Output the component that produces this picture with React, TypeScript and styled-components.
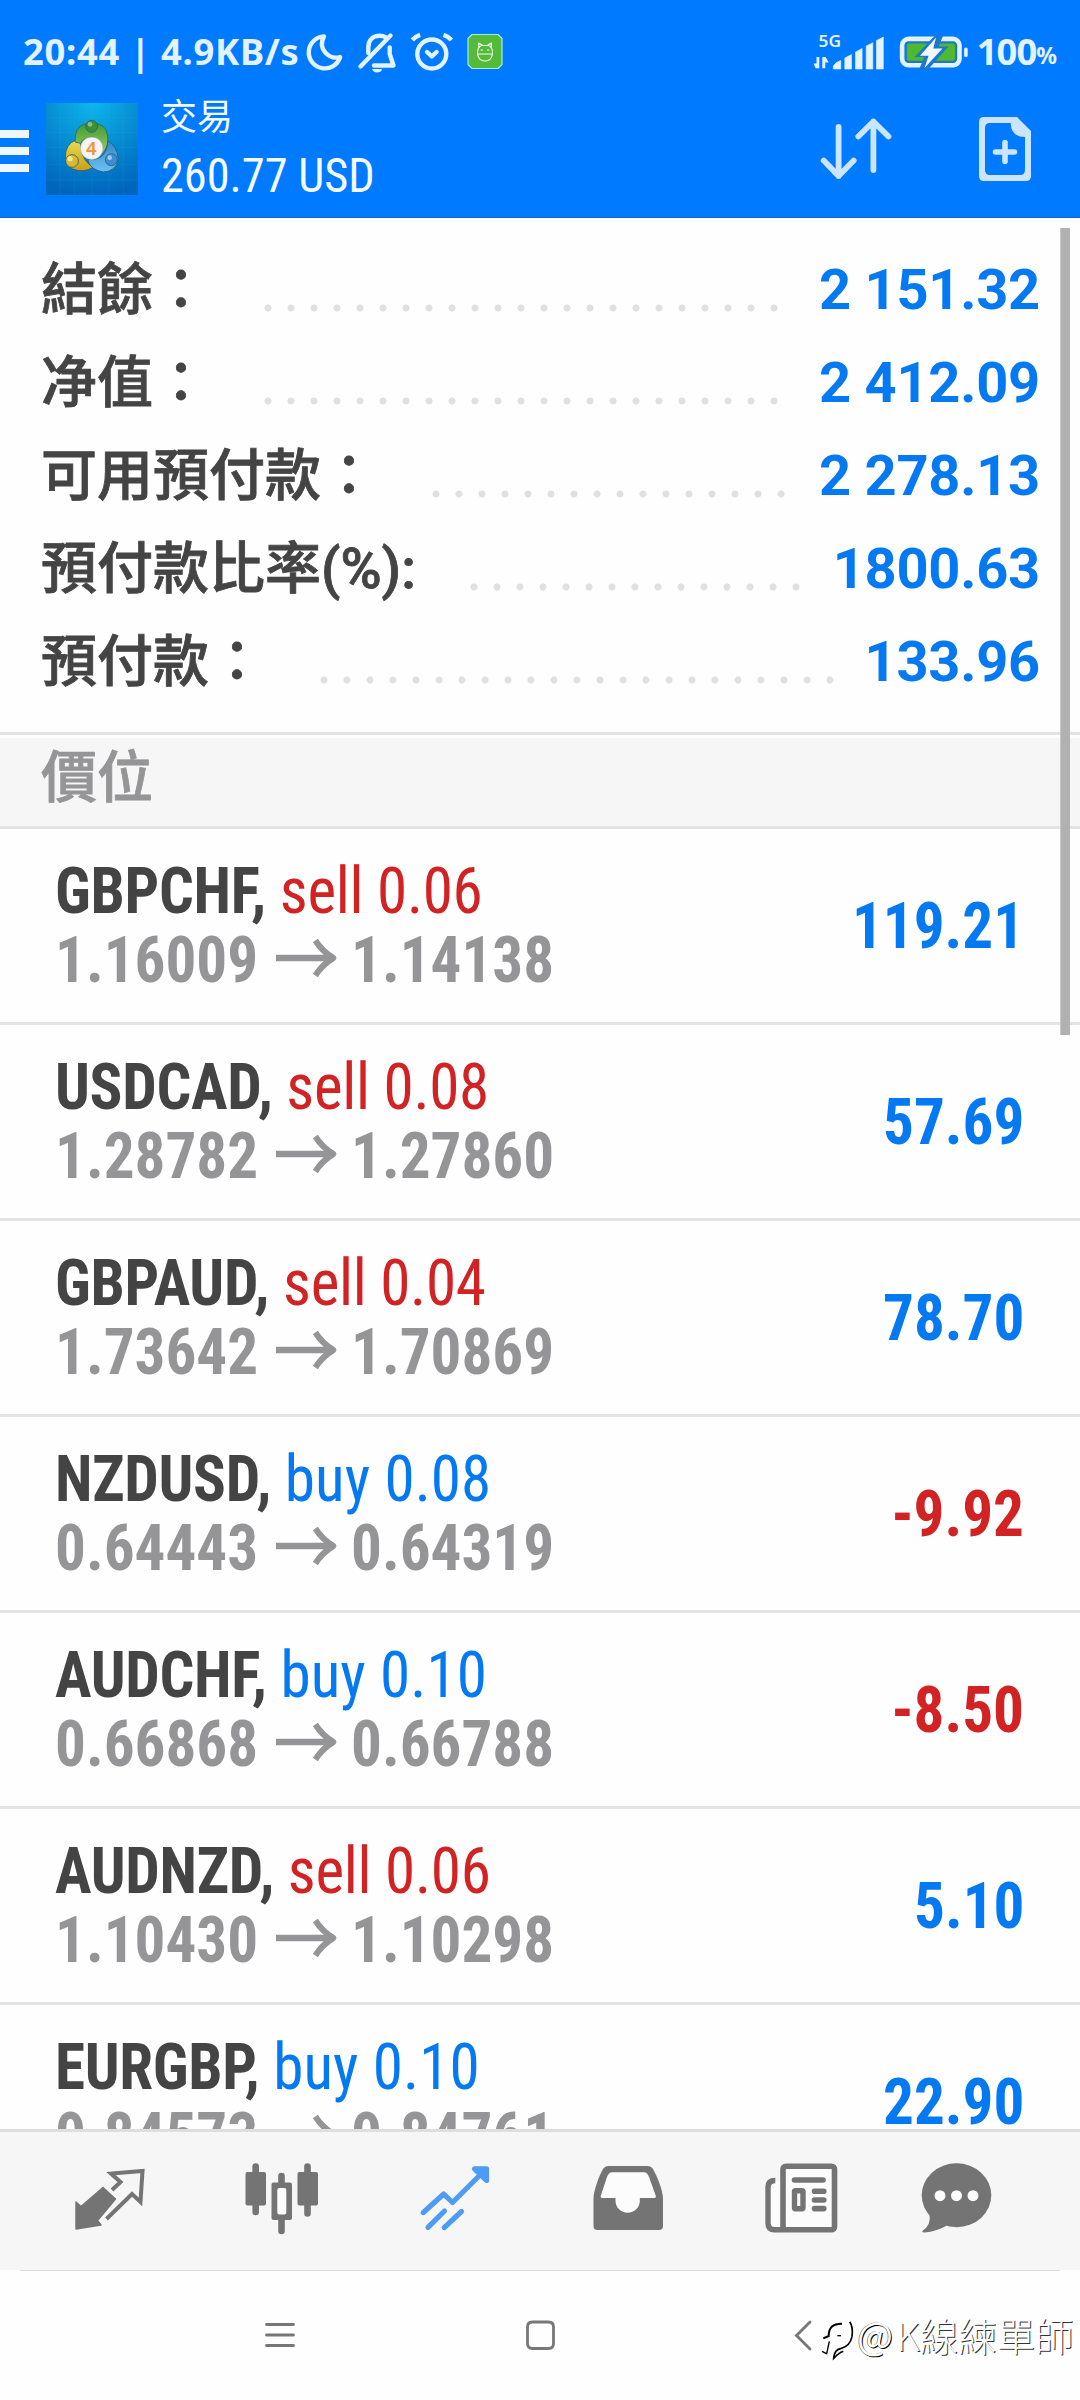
import React from 'react';
import styled, { createGlobalStyle } from 'styled-components';

const BLUE = '#007aff';
const VALUE_BLUE = '#0579f2';
const RED = '#d12323';
const ICE = '#e2f2ff';
const GREY = '#747474';
const LINE = '#e3e3e3';

const GlobalStyle = createGlobalStyle`
  * { box-sizing: border-box; }
  body {
    margin: 0;
    background: #fefefe;
    font-family: Roboto, "Noto Sans CJK TC", sans-serif;
  }
  svg { display: block; flex: none; }
`;

const Screen = styled.div`
  width: 1080px;
  height: 2400px;
  display: flex;
  flex-direction: column;
  overflow: hidden;
  background: #fefefe;
`;

/* ---------- header ---------- */

const Header = styled.header`
  flex: none;
  height: 218px;
  background: ${BLUE};
  border-bottom: 1px solid #1565c0;
`;

const StatusBar = styled.div`
  height: 102px;
  padding: 0 23px 0 23px;
  display: flex;
  align-items: center;
  justify-content: space-between;
  color: ${ICE};
`;

const StatusGroup = styled.div`
  display: flex;
  align-items: center;
`;

const StatusText = styled.span<{ $spacing?: number }>`
  font: 700 36.4px/54px "Noto Sans", sans-serif;
  letter-spacing: ${(p) => p.$spacing ?? 0}px;
  white-space: pre;
`;

const Percent = styled.span`
  font: 700 23px/54px "Noto Sans", sans-serif;
  padding-top: 8px;
`;

const AppBar = styled.div`
  height: 115px;
  padding-right: 47px;
  display: flex;
  align-items: flex-start;
`;

const Burger = styled.div`
  width: 29px;
  height: 42px;
  margin: 28px 17px 0 0;
  display: flex;
  flex-direction: column;
  justify-content: space-between;
`;

const BurgerBar = styled.i`
  height: 8px;
  background: #eef7ff;
`;

const LogoBox = styled.div`
  margin: 1px 23px 0 0;
`;

const Titles = styled.div`
  flex: 1;
  color: #f4faff;
`;

const PageTitle = styled.div`
  font-size: 36px;
  line-height: 32px;
  white-space: nowrap;
`;

const Equity = styled.div`
  font-size: 49px;
  font-stretch: 75%;
  line-height: 84px;
  white-space: nowrap;
  transform: scaleX(0.945);
  transform-origin: left;
`;

const HeaderActions = styled.div`
  display: flex;
  gap: 84px;
`;

/* ---------- content ---------- */

const Content = styled.main`
  position: relative;
  flex: none;
  height: 1911px;
  overflow: hidden;
`;

const Scrollbar = styled.div`
  position: absolute;
  top: 10px;
  right: 10px;
  width: 10px;
  height: 807px;
  background: #b1b1b1;
  border-left: 1px solid #c8c8c8;
`;

const Account = styled.section`
  padding: 26px 40px 23px 41px;
  border-bottom: 3px solid ${LINE};
`;

const AccountRow = styled.div`
  height: 93px;
  display: flex;
  align-items: center;
  line-height: 93px;
  font-size: 56px;
  white-space: nowrap;
`;

const AccountLabel = styled.span`
  font-weight: 500;
  color: #444;
  -webkit-text-stroke: 0.8px #444;
`;

const Dots = styled.i<{ $count: number }>`
  width: ${(p) => p.$count * 23}px;
  height: 8px;
  margin: 34px auto 0 54.5px;
  background: radial-gradient(circle at 4px 4px, #e0e0e0 3.1px, transparent 3.9px) 0 0 / 23px 8px repeat-x;
`;

const AccountValue = styled.span`
  font-weight: 700;
  letter-spacing: -0.25px;
  color: ${VALUE_BLUE};
`;

const SectionTitle = styled.h2`
  margin: 3px 0 0;
  height: 91px;
  padding-left: 41px;
  background: #f6f6f6;
  border-bottom: 3px solid ${LINE};
  font-size: 56px;
  line-height: 80px;
  font-weight: 500;
  color: #959597;
  -webkit-text-stroke: 0.8px #959597;
`;

const Position = styled.article`
  height: 196px;
  padding: 28px 56px 0 55px;
  display: flex;
  justify-content: space-between;
  border-bottom: 3px solid ${LINE};
  font-size: 65px;
  font-stretch: 75%;
  font-weight: 700;
  white-space: nowrap;
`;

const PositionLine = styled.div`
  display: flex;
  align-items: center;
  height: 69px;
  line-height: 69px;
  transform: scaleX(0.94);
  transform-origin: left;
`;

const Symbol = styled.span`
  color: #444;
  letter-spacing: -0.3px;
  white-space: pre;
`;

const Side = styled.span<{ $color: string; $spacing: number }>`
  font-weight: 400;
  letter-spacing: ${(p) => p.$spacing}px;
  color: ${(p) => p.$color};
`;

const Price = styled.span`
  color: #959597;
`;

const Profit = styled.div<{ $color: string }>`
  height: 138px;
  line-height: 138px;
  color: ${(p) => p.$color};
  transform: scaleX(0.94);
  transform-origin: right;
`;

const ArrowIcon = styled.svg`
  margin: 0 14px 5px 19px;
`;

/* ---------- bottom ---------- */

const TabBar = styled.nav`
  flex: none;
  height: 141px;
  padding-left: 23px;
  display: flex;
  align-items: center;
  background: #f6f6f6;
  border-top: 3px solid #dedede;
`;

const Tab = styled.div<{ $width: number }>`
  width: ${(p) => p.$width}px;
  display: flex;
  justify-content: center;
`;

const NavBar = styled.footer`
  position: relative;
  flex: 1;
  padding-left: 150px;
  display: flex;
  align-items: center;
  background: #fefefe;

  &::before {
    content: '';
    position: absolute;
    top: 0;
    left: 20px;
    right: 20px;
    height: 1px;
    background: #dcdcdc;
  }
`;

const NavKey = styled.div`
  width: 260px;
  display: flex;
  justify-content: center;
`;

const Watermark = styled.div`
  position: absolute;
  left: 820px;
  top: 35px;
  display: flex;
  align-items: center;
  height: 58px;
  color: #fff;
  white-space: nowrap;
`;

const WatermarkAt = styled.span`
  margin: 0 3px 0 1px;
  font: 400 38px/58px "Noto Sans CJK TC", sans-serif;
  text-shadow: 1px 1px 0 #000, -0.5px -0.5px 0 #444;
`;

const WatermarkName = styled.span`
  font: 300 38.4px/58px "Noto Sans CJK TC", sans-serif;
  text-shadow: 1px 1px 0 #333;
`;

/* ---------- icons ---------- */

const StatusIcons = () => (
  <svg width="204" height="54" viewBox="300.5 24 204 54" fill="none" stroke={ICE} strokeWidth="4.4" strokeLinecap="round" strokeLinejoin="round">
    <path d="M324.5 36.4A16 16 0 1 0 340.6 57C330 60.5 317.5 49 324.5 36.4Z" />
    <path d="M391 35.5L361 66.5" />
    <path d="M368.8 53V47.5C368.8 39.5 374 35.7 380 35.7C382.5 35.7 384.5 36.2 386 37.2" />
    <path d="M390.2 47.5V54L394 65.5H374.5" />
    <path d="M372.5 69H382.8Q381.5 72.6 377.6 72.6Q374 72.6 372.5 69Z" fill={ICE} stroke="none" />
    <circle cx="432.3" cy="54" r="14.5" />
    <path d="M427.5 52L432.3 56.4L437.1 52" />
    <path d="M412.8 40Q416 36.3 420.6 34.8M444 34.8Q448.8 36.3 452 40" strokeLinecap="butt" />
    <path d="M472.5 34.5H498.5L502.5 38.5V64.5L498.5 68.5H472.5L468.5 64.5V38.5Z" fill="#54ba3a" stroke="#a5ecdf" strokeWidth="1.2" />
    <g stroke="#f0fff0" strokeWidth="1.2">
      <path d="M478 53.5Q478 46.500 482 45.500H489Q493 46.500 493 53.500Q492 61 485.500 61Q479 61 478 53.500Z" />
      <path d="M478 54H493M479.500 47.500L479 43L482.500 45M491.500 47.500L492 43L488.500 45M481.500 50H483M488 50H489.500" />
    </g>
  </svg>
);

const SignalIcons = () => (
  <svg width="166" height="54" viewBox="810.5 24 166 54" fill={ICE}>
    <text x="818" y="46.700" fontFamily="Noto Sans, sans-serif" fontWeight="600" fontSize="15.500" textLength="22.500" lengthAdjust="spacingAndGlyphs">5G</text>
    <path d="M818.800 57V68.200H815.200L813 63.500H816V57Z M821.800 68.200V57H825L828.300 62.500H824.800V68.200Z" />
    <path d="M832.800 69V66Q835 62 840.300 60.500V69Z M844.300 69V58L851 54.500V69Z M855 69V52L861.600 48.500V69Z M865.700 69V46L872.300 42.700V69Z M876 69V40.500L882.800 37V69Z" stroke={ICE} strokeWidth="0.6" strokeLinejoin="round" />
    <rect x="901.600" y="38.900" width="57.400" height="26.400" rx="6.500" fill="#1e78c8" stroke={ICE} strokeWidth="4.600" />
    <rect x="906.500" y="43.500" width="48" height="17.200" rx="2.500" fill="#4fb92f" />
    <rect x="963.600" y="47.500" width="3.600" height="9.400" rx="1.500" />
    <path d="M935 35L914 57H924L918.500 69.500H927.500L948 46.500H938L943 35Z" fill="#1a78d0" />
    <path d="M935.500 37.500L919.500 55.800H928L924 68L942 48.600H932.800Z" fill="#f1f9ff" />
  </svg>
);

const Logo = () => (
  <svg width="92" height="92" viewBox="18 21 276 276">
    <defs>
      <radialGradient id="sky" cx="0.5" cy="0" r="1">
        <stop offset="0" stopColor="#0db6ea" />
        <stop offset="0.55" stopColor="#0688cf" />
        <stop offset="1" stopColor="#0065bd" />
      </radialGradient>
      <linearGradient id="green" x1="0" y1="0" x2="0" y2="1">
        <stop offset="0" stopColor="#3f9b35" />
        <stop offset="1" stopColor="#9bd060" />
      </linearGradient>
      <linearGradient id="gold" x1="0" y1="0" x2="0" y2="1">
        <stop offset="0" stopColor="#eadb52" />
        <stop offset="1" stopColor="#c99f16" />
      </linearGradient>
      <linearGradient id="azure" x1="0" y1="0" x2="0" y2="1">
        <stop offset="0" stopColor="#2f86cc" />
        <stop offset="1" stopColor="#6fc0f2" />
      </linearGradient>
    </defs>
    <rect x="18" y="21" width="276" height="276" fill="url(#sky)" />
    <path d="M60 21V297M103 21V297M156 21V297M207 21V297M250 21V297M18 65H294M18 110H294M18 155H294M18 205H294M18 252H294" stroke="#4fc4f0" strokeOpacity="0.14" strokeWidth="2" />
    <g stroke="#2a6070" strokeWidth="2.500">
      <path d="M120 131Q88 132 78 165Q70 205 98 219Q130 232 160 214Q128 196 124 160Z" fill="url(#gold)" />
      <path d="M105 138Q104 90 135 84H175Q206 92 204 140Q195 170 182 175Q184 130 155 124Q128 126 122 142Z" fill="url(#green)" />
      <path d="M203 134Q232 150 235 190Q228 226 190 228Q150 222 143 190Q178 192 190 176Q203 160 203 134Z" fill="url(#azure)" />
      <circle cx="155" cy="91" r="18" fill="#3e8d3a" />
      <circle cx="96" cy="195" r="19" fill="#d8b931" />
      <circle cx="214" cy="191" r="18" fill="#3b8ed6" />
    </g>
    <circle cx="150" cy="85" r="7" fill="#a7dc9d" opacity="0.7" />
    <circle cx="90" cy="188" r="8" fill="#fdf3a8" opacity="0.8" />
    <circle cx="209" cy="185" r="7" fill="#b5defa" opacity="0.8" />
    <circle cx="155" cy="157" r="34" fill="#f8f4f2" stroke="#8a9a9a" strokeWidth="1.500" />
    <text x="154" y="177" textAnchor="middle" fontFamily="Noto Sans, sans-serif" fontSize="56" fontWeight="600" fill="#f0943c">4</text>
  </svg>
);

const SortIcon = () => (
  <svg width="74" height="115" viewBox="819 102 74 115" fill="none" stroke="#cbe5ff" strokeWidth="5.800" strokeLinecap="round" strokeLinejoin="round">
    <path d="M838.600 127V176M823.700 160.500L838.600 176L853.700 160.500" />
    <path d="M873.400 170V121.500M858.300 136.500L873.400 121.500L888.500 136.500" />
  </svg>
);

const NewOrderIcon = () => (
  <svg width="56" height="115" viewBox="977 102 56 115">
    <path fillRule="evenodd" fill="#cbe5ff" d="M984 117H1017L1031 131V176Q1031 181 1026 181H984Q979 181 979 176V122Q979 117 984 117ZM990 123Q985 123 985 128V170Q985 175 990 175H1020Q1025 175 1025 170V137Q1011 137 1010.700 123Z" />
    <path d="M995.500 152H1014.500M1005 142.500V161.500" stroke="#cbe5ff" strokeWidth="5.600" strokeLinecap="round" />
  </svg>
);

const PriceArrow = () => (
  <ArrowIcon width="66" height="40" viewBox="0 0 66 40" fill="none" stroke="#959597" strokeWidth="6.400">
    <path d="M0 20H62M42 2.500Q49 13 61 20Q49 27 42 37.500" strokeLinejoin="round" />
  </ArrowIcon>
);

const tabs = [
  {
    name: 'quotes', x: 59.5, width: 173,
    art: (
      <>
        <path d="M75.500 2202L80.500 2206.500L102.500 2187.500L115 2199L97 2220.500L100.500 2225L75.500 2229Z" fill={GREY} stroke={GREY} strokeWidth="1.500" strokeLinejoin="round" />
        <path d="M111.500 2190L120 2182L110.500 2173.500L142 2171L140 2202L131.500 2194L106 2219" fill="none" stroke={GREY} strokeWidth="4" />
      </>
    ),
  },
  {
    name: 'chart', x: 232.5, width: 173,
    art: (
      <>
        <path d="M255.200 2166.500V2212M281 2176V2231M307 2166.500V2213.500" stroke={GREY} strokeWidth="6.600" strokeLinecap="round" />
        <rect x="245" y="2172" width="20.500" height="33.500" rx="2" fill={GREY} />
        <rect x="297" y="2172" width="20.500" height="33.500" rx="2" fill={GREY} />
        <rect x="271" y="2182.500" width="20.500" height="37.500" rx="2" fill={GREY} />
        <rect x="276.800" y="2188" width="9" height="26.500" rx="2" fill="#fcfcfc" />
      </>
    ),
  },
  {
    name: 'trade', x: 405.5, width: 173,
    art: (
      <g fill="none" stroke="#4c9cf5" strokeWidth="5.200" strokeLinecap="round" strokeLinejoin="round">
        <path d="M422.800 2212.500L443.200 2194L452 2202.500L484 2170.500" />
        <path d="M474 2168.800H486V2180.500Z" fill="#4c9cf5" />
        <path d="M444 2211L427.500 2227.300M461 2211.500L443.700 2227.600" />
      </g>
    ),
  },
  {
    name: 'history', x: 578.5, width: 173,
    art: (
      <>
        <path d="M593 2199C593 2190 599 2175 602.500 2169Q604.500 2166 608 2166H647Q650.500 2166 652.500 2169C656 2175 662.500 2190 662.500 2199V2226Q662.500 2230 658.500 2230H597Q593 2230 593 2226Z" fill={GREY} />
        <path d="M601.500 2198Q599.500 2198 600.500 2195L606.500 2177Q608 2172.300 612 2172.300H643.500Q647 2172.300 648.500 2177L655 2195Q656 2198 654 2198H639.300V2201A12 11.500 0 0 1 615 2201V2198Z" fill="#fcfcfc" />
      </>
    ),
  },
  {
    name: 'news', x: 751.5, width: 173,
    art: (
      <>
        <path d="M774.500 2180.500Q767.500 2180.500 767.500 2187V2223Q767.500 2229.800 774 2229.800H784V2182Z" fill="#fcfcfc" />
        <path d="M774.800 2180.500Q767.500 2180.500 767.500 2187V2223Q767.500 2229.800 774 2229.800H784" fill="none" stroke={GREY} strokeWidth="5.400" />
        <rect x="782.500" y="2166.200" width="51.500" height="63.600" rx="3" fill="#fcfcfc" stroke={GREY} strokeWidth="5.600" />
        <path d="M794 2180H822.500M814 2191.300H823.300M814 2200H823.300M814 2208.600H823.300" stroke={GREY} strokeWidth="5.600" strokeLinecap="round" />
        <rect x="794" y="2190.700" width="8.500" height="18" rx="1" fill="#fcfcfc" stroke={GREY} strokeWidth="5.400" />
      </>
    ),
  },
  {
    name: 'chat', x: 906.5, width: 137,
    art: (
      <>
        <ellipse cx="956" cy="2195.300" rx="34.800" ry="32" fill={GREY} />
        <path d="M929 2214Q931 2225 921.800 2231Q921.500 2232.500 924 2232.500Q936 2231.500 946.500 2225.500Z" fill={GREY} />
        <circle cx="939.500" cy="2195.700" r="5.500" fill="#fcfcfc" />
        <circle cx="956" cy="2195.700" r="5.500" fill="#fcfcfc" />
        <circle cx="972.500" cy="2195.700" r="5.500" fill="#fcfcfc" />
      </>
    ),
  },
];

const navKeys = [
  { name: 'recents', d: 'M6.500 9.500H33.500M6.500 20H33.500M6.500 30.500H33.500' },
  { name: 'home', d: 'M12.500 7H28.500Q33.500 7 33.500 12V28.500Q33.500 33.500 28.500 33.500H12.500Q7.500 33.500 7.500 28.500V12Q7.500 7 12.500 7Z' },
  { name: 'back', d: 'M30 7L16.500 20.500L30 34' },
];

const WatermarkLogo = () => (
  <svg width="36" height="58" viewBox="120 57 108 174" fill="none" stroke="#000">
    <path d="M130 157L146 150Q146 112 186 113" strokeWidth="6" />
    <path d="M148 166L140 203L126 196" strokeWidth="4" />
    <path d="M209 107Q220 122 216 152Q210 180 184 187Q163 190 161 217Q176 201 190 196" strokeWidth="5" />
    <path d="M172 149H183" strokeWidth="4" />
  </svg>
);

/* ---------- data ---------- */

const account = [
  { label: '結餘：', dots: 23, value: '2 151.32' },
  { label: '净值：', dots: 23, value: '2 412.09' },
  { label: '可用預付款：', dots: 16, value: '2 278.13' },
  { label: '預付款比率(%):', dots: 15, value: '1800.63' },
  { label: '預付款：', dots: 23, value: '133.96' },
];

const positions = [
  { symbol: 'GBPCHF', side: 'sell', lots: '0.06', open: '1.16009', now: '1.14138', profit: '119.21' },
  { symbol: 'USDCAD', side: 'sell', lots: '0.08', open: '1.28782', now: '1.27860', profit: '57.69' },
  { symbol: 'GBPAUD', side: 'sell', lots: '0.04', open: '1.73642', now: '1.70869', profit: '78.70' },
  { symbol: 'NZDUSD', side: 'buy', lots: '0.08', open: '0.64443', now: '0.64319', profit: '-9.92' },
  { symbol: 'AUDCHF', side: 'buy', lots: '0.10', open: '0.66868', now: '0.66788', profit: '-8.50' },
  { symbol: 'AUDNZD', side: 'sell', lots: '0.06', open: '1.10430', now: '1.10298', profit: '5.10' },
  { symbol: 'EURGBP', side: 'buy', lots: '0.10', open: '0.84573', now: '0.84761', profit: '22.90' },
];

export default function App() {
  return (
    <Screen>
      <GlobalStyle />
      <Header>
        <StatusBar>
          <StatusGroup>
            <StatusText $spacing={0.7}>20:44 | 4.9KB/s</StatusText>
            <StatusIcons />
          </StatusGroup>
          <StatusGroup>
            <SignalIcons />
            <StatusText $spacing={-1}>100</StatusText>
            <Percent>%</Percent>
          </StatusGroup>
        </StatusBar>
        <AppBar>
          <Burger>
            <BurgerBar />
            <BurgerBar />
            <BurgerBar />
          </Burger>
          <LogoBox>
            <Logo />
          </LogoBox>
          <Titles>
            <PageTitle>交易</PageTitle>
            <Equity>260.77 USD</Equity>
          </Titles>
          <HeaderActions>
            <SortIcon />
            <NewOrderIcon />
          </HeaderActions>
        </AppBar>
      </Header>

      <Content>
        <Account>
          {account.map((row) => (
            <AccountRow key={row.label}>
              <AccountLabel>{row.label}</AccountLabel>
              <Dots $count={row.dots} />
              <AccountValue>{row.value}</AccountValue>
            </AccountRow>
          ))}
        </Account>
        <SectionTitle>價位</SectionTitle>
        {positions.map((p) => (
          <Position key={p.symbol}>
            <div>
              <PositionLine>
                <Symbol>{p.symbol}, </Symbol>
                <Side
                  $color={p.side === 'sell' ? RED : VALUE_BLUE}
                  $spacing={p.side === 'sell' ? -0.3 : 0.1}
                >
                  {p.side} {p.lots}
                </Side>
              </PositionLine>
              <PositionLine>
                <Price>{p.open}</Price>
                <PriceArrow />
                <Price>{p.now}</Price>
              </PositionLine>
            </div>
            <Profit $color={p.profit.startsWith('-') ? RED : VALUE_BLUE}>{p.profit}</Profit>
          </Position>
        ))}
        <Scrollbar />
      </Content>

      <TabBar>
        {tabs.map((tab) => (
          <Tab key={tab.name} $width={tab.width}>
            <svg width="100" height="100" viewBox={`${tab.x} 2151 100 100`}>
              {tab.art}
            </svg>
          </Tab>
        ))}
      </TabBar>

      <NavBar>
        {navKeys.map((key) => (
          <NavKey key={key.name}>
            <svg width="40" height="40" viewBox="0 0 40 40" fill="none" stroke="#777" strokeWidth="2.800" strokeLinecap="round">
              <path d={key.d} />
            </svg>
          </NavKey>
        ))}
        <Watermark>
          <WatermarkLogo />
          <WatermarkAt>@</WatermarkAt>
          <WatermarkName>K線練單師</WatermarkName>
        </Watermark>
      </NavBar>
    </Screen>
  );
}
